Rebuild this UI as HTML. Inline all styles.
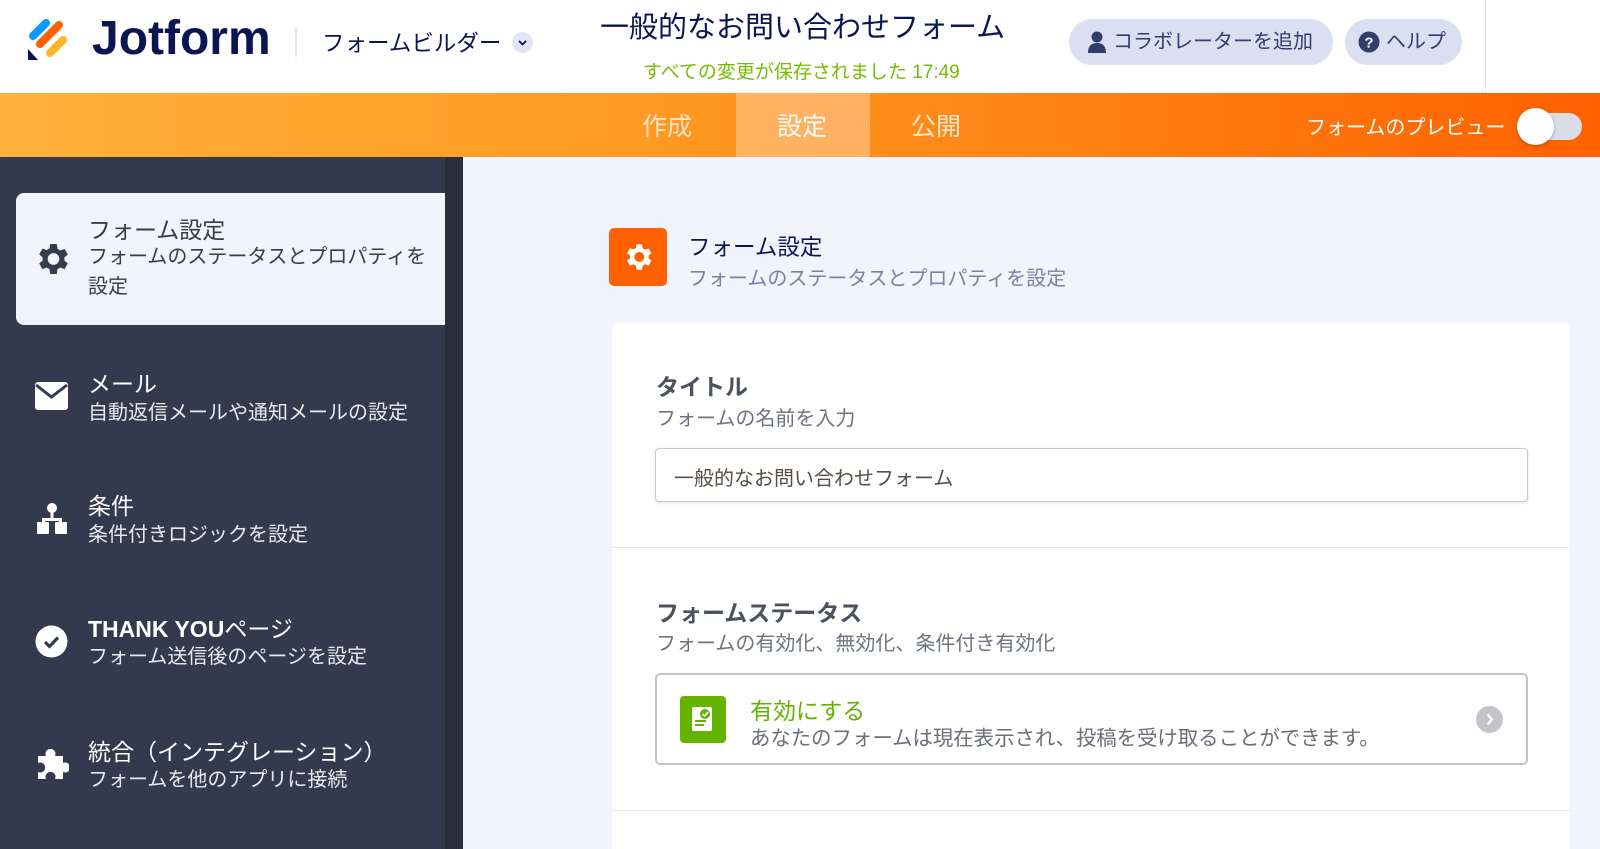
<!DOCTYPE html>
<html><head><meta charset="utf-8"><style>
*{margin:0;padding:0;box-sizing:border-box}
html,body{width:1600px;height:849px;overflow:hidden;background:#f3f3fe}
body{font-family:"Liberation Sans","Noto Sans CJK JP",sans-serif;position:relative}
.a{position:absolute;white-space:nowrap}
#hdr{position:absolute;left:0;top:0;width:1600px;height:93px;background:#fff}
#bar{position:absolute;left:0;top:93px;width:1600px;height:64px;background:linear-gradient(90deg,#ffb13b 0%,#ff9a22 40%,#ff8416 65%,#ff6100 100%)}
#side{position:absolute;left:0;top:157px;width:445px;height:692px;background:#333a4d}
#scr{position:absolute;left:445px;top:157px;width:18px;height:692px;background:#2a2f3b}
.st{color:#fff;font-size:23px}
.ss{color:#e8e9ef;font-size:20px}
.btn{position:absolute;top:19px;height:46px;border-radius:23px;background:#dadff2;color:#343c6a;font-size:20px;line-height:46px;white-space:nowrap}
</style></head><body>
<div id="hdr"></div>
<svg class="a" style="left:27px;top:16px" width="42" height="44" viewBox="0 0 42 44">
<line x1="6" y1="20" x2="19" y2="7" stroke="#0a99ff" stroke-width="8" stroke-linecap="round"/>
<line x1="13" y1="28" x2="32" y2="9" stroke="#ff6100" stroke-width="8" stroke-linecap="round"/>
<line x1="23" y1="37" x2="36" y2="24" stroke="#ffb629" stroke-width="8" stroke-linecap="round"/>
<path d="M1 33 L1 44 L11 44 Z" fill="#0a1551"/>
</svg>
<div class="a" style="left:92px;top:11px;font-size:48px;font-weight:bold;color:#0a1551;letter-spacing:0">Jotform</div>
<div class="a" style="left:295px;top:27px;width:2px;height:30px;background:#e3e5ee"></div>
<div class="a" style="left:322px;top:26px;font-size:22.5px;color:#0a1551">フォームビルダー</div>
<div class="a" style="left:512px;top:32px;width:21px;height:21px;border-radius:50%;background:#e3e5f3"></div>
<svg class="a" style="left:516px;top:37px" width="13" height="11"><path d="M3 4 L6.5 7.5 L10 4" stroke="#0a1551" stroke-width="1.8" fill="none"/></svg>
<div class="a" style="left:600px;top:4px;font-size:29px;color:#0a1551">一般的なお問い合わせフォーム</div>
<div class="a" style="left:643px;top:57px;font-size:19px;color:#78bb07">すべての変更が保存されました 17:49</div>
<div class="btn" style="left:1069px;width:264px"><svg style="position:absolute;left:19px;top:12px" width="18" height="22"><circle cx="9" cy="6" r="5.5" fill="#343c6a"/><path d="M0 22 Q0 12 9 12 Q18 12 18 22Z" fill="#343c6a"/></svg><span style="position:absolute;left:44px">コラボレーターを追加</span></div>
<div class="btn" style="left:1345px;width:117px"><svg style="position:absolute;left:13px;top:12px" width="22" height="22"><circle cx="11" cy="11" r="10.5" fill="#343c6a"/><text x="11" y="16.5" text-anchor="middle" font-size="15" font-weight="bold" fill="#fff" font-family="Liberation Sans">?</text></svg><span style="position:absolute;left:41px">ヘルプ</span></div>
<div class="a" style="left:1485px;top:0;width:1px;height:93px;background:#e8e8ee"></div>

<div id="bar"></div>
<div class="a" style="left:736px;top:93px;width:134px;height:64px;background:rgba(255,255,255,0.3)"></div>
<div class="a" style="left:642px;top:107px;font-size:25px;color:rgba(255,255,255,0.75)">作成</div>
<div class="a" style="left:777px;top:107px;font-size:25px;color:#fff">設定</div>
<div class="a" style="left:911px;top:107px;font-size:25px;color:rgba(255,255,255,0.8)">公開</div>
<div class="a" style="left:1306px;top:111px;font-size:20px;color:#fff">フォームのプレビュー</div>
<div class="a" style="left:1524px;top:113px;width:58px;height:27px;border-radius:14px;background:#dadde8"></div>
<div class="a" style="left:1517px;top:108px;width:37px;height:37px;border-radius:50%;background:#fff;box-shadow:0 1px 3px rgba(0,0,0,0.3)"></div>

<div id="side"></div><div id="scr"></div>
<div class="a" style="left:16px;top:193px;width:429px;height:132px;background:#f3f3fe;border-radius:8px 0 0 8px"></div>
<svg class="a" style="left:32px;top:239px" width="40" height="40" viewBox="0 0 24 24"><path fill="#343c4d" d="M19.4 13a7.5 7.5 0 0 0 0-2l2.1-1.6-2-3.5-2.5 1a7 7 0 0 0-1.7-1L14.9 3h-4l-.4 2.7a7 7 0 0 0-1.7 1l-2.5-1-2 3.5L6.4 11a7.5 7.5 0 0 0 0 2l-2.1 1.6 2 3.5 2.5-1a7 7 0 0 0 1.7 1l.4 2.9h4l.4-2.9a7 7 0 0 0 1.7-1l2.5 1 2-3.5zM12.9 15.5a3.5 3.5 0 1 1 0-7 3.5 3.5 0 0 1 0 7z"/></svg>
<div class="a" style="left:88px;top:211px;font-size:23px;color:#343c4d">フォーム設定</div>
<div class="a" style="left:88px;top:242px;font-size:20px;color:#343c4d;line-height:30px;white-space:normal;width:345px">フォームのステータスとプロパティを設定</div>

<svg class="a" style="left:35px;top:382px" width="33" height="28"><rect x="0" y="0" width="33" height="28" rx="3" fill="#fff"/><path d="M1 3 L16.5 15 L32 3" stroke="#333a4d" stroke-width="3" fill="none"/></svg>
<div class="a st" style="left:88px;top:365px">メール</div>
<div class="a ss" style="left:88px;top:396px">自動返信メールや通知メールの設定</div>

<svg class="a" style="left:36px;top:502px" width="32" height="33"><circle cx="16" cy="6" r="5" fill="#fff"/><rect x="14.5" y="10" width="3" height="8" fill="#fff"/><rect x="6" y="16" width="20" height="3" fill="#fff"/><rect x="1" y="20" width="12" height="12" rx="1" fill="#fff"/><rect x="19" y="20" width="12" height="12" rx="1" fill="#fff"/><rect x="6" y="18" width="3" height="3" fill="#fff"/><rect x="23" y="18" width="3" height="3" fill="#fff"/></svg>
<div class="a st" style="left:88px;top:487px">条件</div>
<div class="a ss" style="left:88px;top:518px">条件付きロジックを設定</div>

<svg class="a" style="left:35px;top:625px" width="33" height="33"><circle cx="16.5" cy="16.5" r="16" fill="#fff"/><path d="M10 17 L14.5 21.5 L23 12.5" stroke="#333a4d" stroke-width="3.2" fill="none"/></svg>
<div class="a st" style="left:88px;top:610px"><b style="font-weight:bold">THANK YOU</b>ページ</div>
<div class="a ss" style="left:88px;top:640px">フォーム送信後のページを設定</div>

<svg class="a" style="left:35px;top:746px" width="34" height="34" viewBox="0 0 34 34"><path fill="#fff" d="M3 10 H11 A5 5 0 1 1 20 10 H28 V17 A5 5 0 1 1 28 26 V33 H20 A5 5 0 1 0 11 33 H3 V26 A5 5 0 1 0 3 17Z"/></svg>
<div class="a st" style="left:88px;top:733px">統合（インテグレーション）</div>
<div class="a ss" style="left:88px;top:763px">フォームを他のアプリに接続</div>

<div class="a" style="left:609px;top:228px;width:58px;height:58px;border-radius:5px;background:#ff6100"></div>
<svg class="a" style="left:621px;top:240px" width="34" height="34" viewBox="0 0 24 24"><path fill="#fff" d="M19.4 13a7.5 7.5 0 0 0 0-2l2.1-1.6-2-3.5-2.5 1a7 7 0 0 0-1.7-1L14.9 3h-4l-.4 2.7a7 7 0 0 0-1.7 1l-2.5-1-2 3.5L6.4 11a7.5 7.5 0 0 0 0 2l-2.1 1.6 2 3.5 2.5-1a7 7 0 0 0 1.7 1l.4 2.9h4l.4-2.9a7 7 0 0 0 1.7-1l2.5 1 2-3.5zM12.9 15.5a3.5 3.5 0 1 1 0-7 3.5 3.5 0 0 1 0 7z"/></svg>
<div class="a" style="left:688px;top:230px;font-size:22.5px;color:#0a1551">フォーム設定</div>
<div class="a" style="left:688px;top:262px;font-size:20px;color:#7b80a6">フォームのステータスとプロパティを設定</div>

<div class="a" style="left:612px;top:323px;width:958px;height:540px;background:#fff;border-radius:4px"></div>
<div class="a" style="left:612px;top:547px;width:958px;height:1px;background:#e6e7ec"></div>
<div class="a" style="left:612px;top:810px;width:958px;height:1px;background:#e6e7ec"></div>
<div class="a" style="left:656px;top:368px;font-size:23px;font-weight:bold;color:#4b525e">タイトル</div>
<div class="a" style="left:656px;top:402px;font-size:20px;color:#6e747f">フォームの名前を入力</div>
<div class="a" style="left:655px;top:448px;width:873px;height:54px;border:1px solid #c8c8cc;border-radius:4px;box-shadow:0 1px 3px rgba(0,0,0,0.12)"></div>
<div class="a" style="left:674px;top:462px;font-size:20px;color:#574f45">一般的なお問い合わせフォーム</div>
<div class="a" style="left:656px;top:594px;font-size:23px;font-weight:bold;color:#4b525e">フォームステータス</div>
<div class="a" style="left:656px;top:627px;font-size:20px;color:#6e747f">フォームの有効化、無効化、条件付き有効化</div>
<div class="a" style="left:655px;top:673px;width:873px;height:92px;border:2px solid #c4c4c8;border-radius:5px"></div>
<div class="a" style="left:680px;top:696px;width:46px;height:47px;border-radius:4px;background:#64b300"></div>
<svg class="a" style="left:690px;top:705px" width="26" height="29"><rect x="2" y="2" width="20" height="24" rx="2" fill="#fff"/><circle cx="15" cy="9" r="5" fill="#64b300"/><path d="M12.5 9 L14.5 11 L18 7" stroke="#fff" stroke-width="1.6" fill="none"/><rect x="5" y="15" width="11" height="2" fill="#64b300"/><rect x="5" y="19" width="9" height="2" fill="#64b300"/></svg>
<div class="a" style="left:750px;top:692px;font-size:23px;color:#64b300">有効にする</div>
<div class="a" style="left:750px;top:721px;font-size:20.4px;color:#6a6f77">あなたのフォームは現在表示され、投稿を受け取ることができます。</div>
<div class="a" style="left:1476px;top:706px;width:27px;height:27px;border-radius:50%;background:#c4c4c8"></div>
<svg class="a" style="left:1476px;top:706px" width="27" height="27"><path d="M11.5 8.5 L16 13.5 L11.5 18.5" stroke="#fff" stroke-width="2.4" fill="none"/></svg>
</body></html>
